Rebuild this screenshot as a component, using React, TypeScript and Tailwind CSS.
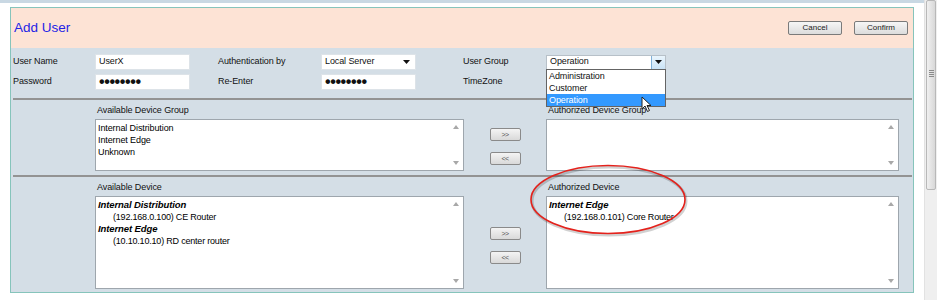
import React from "react";

const font = "font-['Liberation_Sans',Arial,sans-serif]";

const SmallBtn = ({ label, w = "w-[54px]" }: { label: string; w?: string }) => (
  <button
    className={`${w} h-[14px] flex items-center justify-center rounded-[2px] border border-[#7a7a7a] bg-gradient-to-b from-[#f6f6f6] to-[#dcdcdc] text-[8px] leading-none text-[#222]`}
  >
    {label}
  </button>
);

const ArrowBtn = ({ label }: { label: string }) => (
  <button className="w-[31px] h-[13px] flex items-center justify-center rounded-[2px] border border-[#8a8a8a] bg-gradient-to-b from-[#f4f4f4] to-[#d9d9d9] text-[7px] leading-none text-[#555] tracking-[-0.5px]">
    {label}
  </button>
);

const ListBox = ({ w, h, children }: { w: string; h: string; children?: React.ReactNode }) => (
  <div className={`${w} ${h} relative bg-white border border-[#9ea6ad] flex`}>
    <div className="flex-1 pl-[2px] pt-[2px] text-[9px] leading-[12px] text-black">{children}</div>
    <div className="w-[14px] flex flex-col justify-between items-center py-[5px]">
      <svg width="6" height="4" viewBox="0 0 6 4">
        <path d="M0 4 L3 0 L6 4 Z" fill="#a8a8a8" />
      </svg>
      <svg width="6" height="4" viewBox="0 0 6 4">
        <path d="M0 0 L3 4 L6 0 Z" fill="#a8a8a8" />
      </svg>
    </div>
  </div>
);

const Field = ({ children, w = "w-[95px]" }: { children?: React.ReactNode; w?: string }) => (
  <div className={`${w} h-[16px] bg-white border border-[#dde3e8] flex items-center pl-[3px] text-[9px]`}>
    {children}
  </div>
);

const Dots = () => <span className="text-[16px] leading-none font-bold tracking-[-0.4px]">••••••••</span>;

const Group = ({ name }: { name: string }) => <div className="font-bold italic text-[9.5px]">{name}</div>;
const Item = ({ name }: { name: string }) => <div className="pl-[15px] tracking-[-0.2px]">{name}</div>;

export default function App() {
  return (
    <div className={`${font} relative w-[937px] h-[300px] bg-white flex overflow-hidden text-[#111]`}>
      <div className="flex-1 flex flex-col">
        <div className="h-[3px] bg-[#c9d8e3]" />
        <div className="mt-[4px] ml-[10px] mr-[10px] border border-[#86c4bb] flex flex-col">
          {/* header */}
          <div className="h-[40px] bg-[#fde3d5] flex items-center justify-between pl-[3px] pr-[5px]">
            <div className="text-[13.5px] text-[#2323e6] pt-[1px]">Add User</div>
            <div className="flex gap-[12px]">
              <SmallBtn label="Cancel" />
              <SmallBtn label="Confirm" />
            </div>
          </div>

          {/* body */}
          <div className="bg-[#d4dee6] flex flex-col text-[9px] tracking-[-0.1px]">
            <div className="flex items-center mt-[6px] h-[16px]">
              <div className="w-[84px] pl-[2px]">User Name</div>
              <Field>UserX</Field>
              <div className="w-[28px]" />
              <div className="w-[103px]">Authentication by</div>
              <Field>
                <span className="flex-1">Local Server</span>
                <svg width="7" height="4" viewBox="0 0 7 4" className="mr-[5px]">
                  <path d="M0 0 L7 0 L3.5 4 Z" fill="#111" />
                </svg>
              </Field>
              <div className="w-[47px]" />
              <div className="w-[83px]">User Group</div>
              <div className="relative w-[120px] h-[15px] bg-white border border-[#b7c0c8] flex items-center">
                <span className="flex-1 pl-[3px]">Operation</span>
                <div className="w-[14px] h-full border-l border-[#7fb0d8] bg-gradient-to-b from-[#eaf5fd] to-[#c9e3f6] flex items-center justify-center">
                  <svg width="7" height="4" viewBox="0 0 7 4">
                    <path d="M0 0 L7 0 L3.5 4 Z" fill="#111" />
                  </svg>
                </div>
                {/* open dropdown */}
                <div className="absolute left-[-1px] top-[13px] w-[120px] bg-white border border-[#646464] z-10 flex flex-col leading-[12px] text-[9px]">
                  <div className="pl-[2px] h-[12px]">Administration</div>
                  <div className="pl-[2px] h-[12px]">Customer</div>
                  <div className="pl-[2px] h-[12px] bg-[#3399ff] text-white">Operation</div>
                  <svg width="12" height="17" viewBox="0 0 12 17" className="absolute left-[94px] top-[26px]">
                    <path d="M1 1 L1 13 L4 10 L6.5 15.5 L8.5 14.5 L6 9.5 L10 9.5 Z" fill="#fff" stroke="#222" strokeWidth="1" strokeLinejoin="round" />
                  </svg>
                </div>
              </div>
            </div>
            <div className="flex items-center mt-[4px] h-[16px]">
              <div className="w-[84px] pl-[2px]">Password</div>
              <Field>
                <Dots />
              </Field>
              <div className="w-[28px]" />
              <div className="w-[103px]">Re-Enter</div>
              <Field>
                <Dots />
              </Field>
              <div className="w-[47px]" />
              <div className="w-[83px]">TimeZone</div>
            </div>

            <div className="mt-[8px] ml-[2px] mr-[1px] border-t-2 border-[#939393]" />

            {/* device group section */}
            <div className="flex flex-col pt-[5px]">
              <div className="flex h-[12px] items-center">
                <div className="w-[450px] pl-[86px]">Available Device Group</div>
                <div className="pl-[87px]">Authorized Device Group</div>
              </div>
              <div className="flex items-center mt-[2px] pl-[84px]">
                <ListBox w="w-[369px]" h="h-[52px]">
                  <div>Internal Distribution</div>
                  <div>Internet Edge</div>
                  <div>Unknown</div>
                </ListBox>
                <div className="w-[82px] flex flex-col items-center gap-[11px] pt-[2px]">
                  <ArrowBtn label=">>" />
                  <ArrowBtn label="<<" />
                </div>
                <ListBox w="w-[353px]" h="h-[52px]" />
              </div>
            </div>

            <div className="mt-[4px] ml-[2px] mr-[1px] border-t-2 border-[#939393]" />

            {/* device section */}
            <div className="flex flex-col pt-[5px] pb-[3px]">
              <div className="flex h-[12px] items-center">
                <div className="w-[450px] pl-[86px]">Available Device</div>
                <div className="pl-[87px]">Authorized Device</div>
              </div>
              <div className="flex items-center mt-[2px] pl-[84px]">
                <ListBox w="w-[369px]" h="h-[93px]">
                  <Group name="Internal Distribution" />
                  <Item name="(192.168.0.100) CE Router" />
                  <Group name="Internet Edge" />
                  <Item name="(10.10.10.10) RD center router" />
                </ListBox>
                <div className="w-[82px] flex flex-col items-center gap-[11px] pt-[6px]">
                  <ArrowBtn label=">>" />
                  <ArrowBtn label="<<" />
                </div>
                <ListBox w="w-[353px]" h="h-[93px]">
                  <Group name="Internet Edge" />
                  <Item name="(192.168.0.101) Core Router" />
                </ListBox>
              </div>
            </div>
          </div>
        </div>
      </div>

      {/* page scrollbar */}
      <div className="w-[13px] h-full bg-[#efefef] border-l border-[#e2e2e2] flex flex-col">
        <div className="h-[190px] mx-[1px] rounded-[2px] border border-[#b8b8b8] bg-gradient-to-r from-[#f0f0f0] to-[#d8d8d8] flex flex-col items-center pt-[69px] gap-[1px]">
          <div className="w-[5px] h-[1px] bg-[#8a8a8a]" />
          <div className="w-[5px] h-[1px] bg-[#8a8a8a]" />
          <div className="w-[5px] h-[1px] bg-[#8a8a8a]" />
          <div className="w-[5px] h-[1px] bg-[#8a8a8a]" />
        </div>
      </div>

      {/* red annotation ellipse */}
      <svg className="absolute left-0 top-0 pointer-events-none" width="937" height="300" viewBox="0 0 937 300">
        <ellipse cx="609" cy="201" rx="77" ry="34" fill="none" stroke="#000" strokeOpacity="0.18" strokeWidth="3" />
        <ellipse cx="608" cy="199.5" rx="77" ry="34" fill="none" stroke="#e4221c" strokeWidth="1.6" />
      </svg>
    </div>
  );
}
